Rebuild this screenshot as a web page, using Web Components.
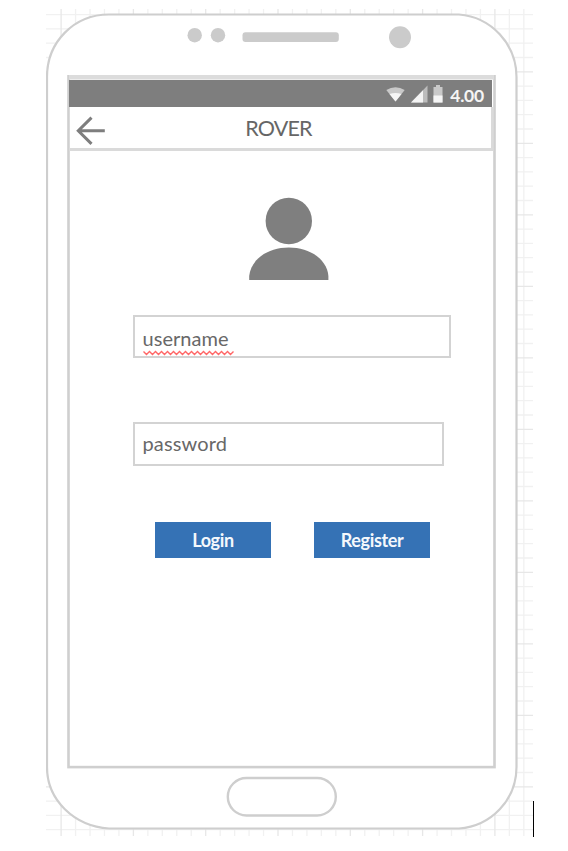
<!DOCTYPE html>
<html lang="en">
<head>
<meta charset="utf-8">
<title>Rover login wireframe</title>
<style>
html,body{margin:0;background:#fff}
body{width:568px;height:851px;overflow:hidden;font-family:Lato,"Noto Sans",sans-serif;color:#666}
</style>
</head>
<body>
<wire-board>
  <phone-frame>
    <status-bar>4.00</status-bar>
    <title-bar>ROVER</title-bar>
    <login-form>
      <user-avatar></user-avatar>
      <text-box spell style="--w:318px;--h:43px;--gap:35px;--pt:9px;--ls:.05px">username</text-box>
      <text-box style="--w:311px;--h:44px;--gap:64px;--pt:7px;--ls:.15px">password</text-box>
      <button-row><push-button>Login</push-button><push-button>Register</push-button></button-row>
    </login-form>
  </phone-frame>
</wire-board>
<script>
function define(name, html, setup) {
  const t = document.createElement('template');
  t.innerHTML = html;
  customElements.define(name, class extends HTMLElement {
    constructor() {
      super();
      this.attachShadow({mode: 'open'}).append(t.content.cloneNode(true));
      if (setup) setup(this.shadowRoot);
    }
  });
}

/* Drawing board: grid paper with the device on it and a text caret at its corner */
define('wire-board', `<style>
:host{display:flex;align-items:flex-end;box-sizing:border-box;width:568px;height:837px;padding:9px 0 0 46px}
.paper{display:grid;width:487px;height:827px;margin-bottom:1px}
.paper>svg,.device{grid-area:1/1}
.caret{width:1px;height:36px;background:#000}
</style>
<div class="paper"><svg width="487" height="827"><g class="g" stroke="#f1f1f1" stroke-width="1.3"/><g class="s" stroke="#e7e7e7" stroke-width="1.3"/></svg><div class="device"><slot></slot></div></div><div class="caret"></div>`,
root => {
  let minor = '', major = '';
  for (let i = 0; i < 34; i++) {
    const x = (15.1 + i * 14.46).toFixed(2), l = `<path d="M${x} 0V827"/>`;
    i % 5 ? minor += l : major += l;
  }
  for (let i = 0; i < 58; i++) {
    const y = (5.6 + i * 14.3).toFixed(2), l = `<path d="M0 ${y}H487"/>`;
    i % 5 === 4 ? major += l : minor += l;
  }
  root.querySelector('.g').innerHTML = minor;
  root.querySelector('.s').innerHTML = major;
});

define('phone-frame', `<style>
:host{display:grid;width:487px;height:827px}
svg,.screen{grid-area:1/1}
svg{display:block}
.screen{box-sizing:border-box;margin:71px 0 0 23px;width:424px;height:688px;display:flex;flex-direction:column}
</style>
<svg width="487" height="827" viewBox="46 9 487 827">
<path d="M109 14.5H459C491 17 516.5 44 516.5 77V767C516.5 800 491 826 459 828.5H109C74 826 47 800 47 767V77C47 42 74 14.5 109 14.5Z" fill="#fff" stroke="#cecece" stroke-width="2.2"/>
<g fill="#cbcbcb"><circle cx="194.7" cy="35.2" r="7.2"/><circle cx="218" cy="35.2" r="7.2"/><rect x="242.5" y="32.3" width="96.3" height="9.8" rx="3"/><circle cx="400" cy="37.2" r="11"/></g>
<rect x="68.5" y="76.3" width="426" height="690.8" fill="#fff" stroke="#cfcfcf" stroke-width="2.6"/>
<path d="M69 77.2H494" stroke="#dcdcdc" stroke-width="4.5"/>
<rect x="227.8" y="778" width="108" height="37.5" rx="18.7" fill="#fff" stroke="#cecece" stroke-width="2.4"/>
</svg><div class="screen"><slot></slot></div>`);

define('status-bar', `<style>
:host{display:flex;justify-content:flex-end;align-items:center;box-sizing:border-box;width:423px;height:27px;padding-right:8px;background:#7e7e7e;color:#f5f5f5;font:700 17.5px/27px Lato,sans-serif;letter-spacing:-.2px}
svg{margin-right:6px}
span{padding-top:3px}
</style>
<svg width="58" height="27" viewBox="386 80 58 27">
<path d="M386.3 90Q395.5 84.5 404.7 90L395.5 101.5Z" fill="#c9c9c9"/><path d="M389.5 94Q395.5 92 401.5 94L395.5 101.5Z" fill="#f5f5f5"/>
<path d="M427.5 85.5V102.5H411Z" fill="#bcbcbc"/><path d="M423 90.2V102.5H411Z" fill="#f4f4f4"/>
<path d="M436 85H440V87H442.5V102.5H433.5V87H436Z" fill="#c9c9c9"/><path d="M433.5 95.5H442.5V102.5H433.5Z" fill="#f5f5f5"/>
</svg><span><slot></slot></span>`);

define('title-bar', `<style>
:host{display:grid;grid-template-columns:1fr auto 1fr;box-sizing:border-box;width:424px;height:44px;border:solid #dadada;border-width:0 2px 3px 1px;font:400 21.5px/42px Lato,sans-serif;color:#666;letter-spacing:-.8px}
svg{margin:8px 0 0 5px}
span{padding-right:4px}
</style>
<svg width="32" height="32" viewBox="75 115 32 32" fill="none" stroke="#7e7e7e" stroke-width="3"><path d="M78.5 130.7H104.8M91.5 117.6L78.3 130.7L91.5 143.9"/></svg><span><slot></slot></span>`);

define('login-form', `<style>
:host{display:flex;flex-direction:column;align-items:flex-start;padding:46px 0 0 64px}
</style><slot></slot>`);

define('user-avatar', `<style>
:host{display:block;margin-left:115px;height:83px}
svg{display:block}
</style><svg width="82" height="83" viewBox="248 197 82 83" fill="#7f7f7f"><circle cx="288.8" cy="221" r="23.2"/><path d="M249.2 280V276C251 259 268 247.5 288.8 247.5S327 259 328.4 276V280Z"/></svg>`);

define('text-box', `<style>
:host{display:flex;align-items:flex-start;box-sizing:border-box;width:var(--w);height:var(--h);margin-top:var(--gap);padding:var(--pt) 0 0 7.5px;border:2px solid #d3d3d3;background:#fff;font:400 20px/24px Lato,sans-serif;color:#686868;letter-spacing:var(--ls)}
.t{display:grid}
svg{display:none}
:host([spell]) svg{display:block}
</style><div class="t"><slot></slot><svg width="91" height="6" viewBox="0 0 91 6" fill="none" stroke="#f66" stroke-width="1.4"><path d="M.5 1.5l3 3 3-3 3 3 3-3 3 3 3-3 3 3 3-3 3 3 3-3 3 3 3-3 3 3 3-3 3 3 3-3 3 3 3-3 3 3 3-3 3 3 3-3 3 3 3-3 3 3 3-3 3 3 3-3 3 3 3-3"/></svg></div>`);

define('button-row', `<style>
:host{display:flex;gap:43px;margin:56px 0 0 22px}
</style><slot></slot>`);

define('push-button', `<style>
:host{display:flex;justify-content:center;width:116px;height:36px;background:#3572b5;color:#f4f8fc;font:700 18px/36px Lato,sans-serif;letter-spacing:-.35px}
</style><slot></slot>`);
</script>
</body>
</html>
